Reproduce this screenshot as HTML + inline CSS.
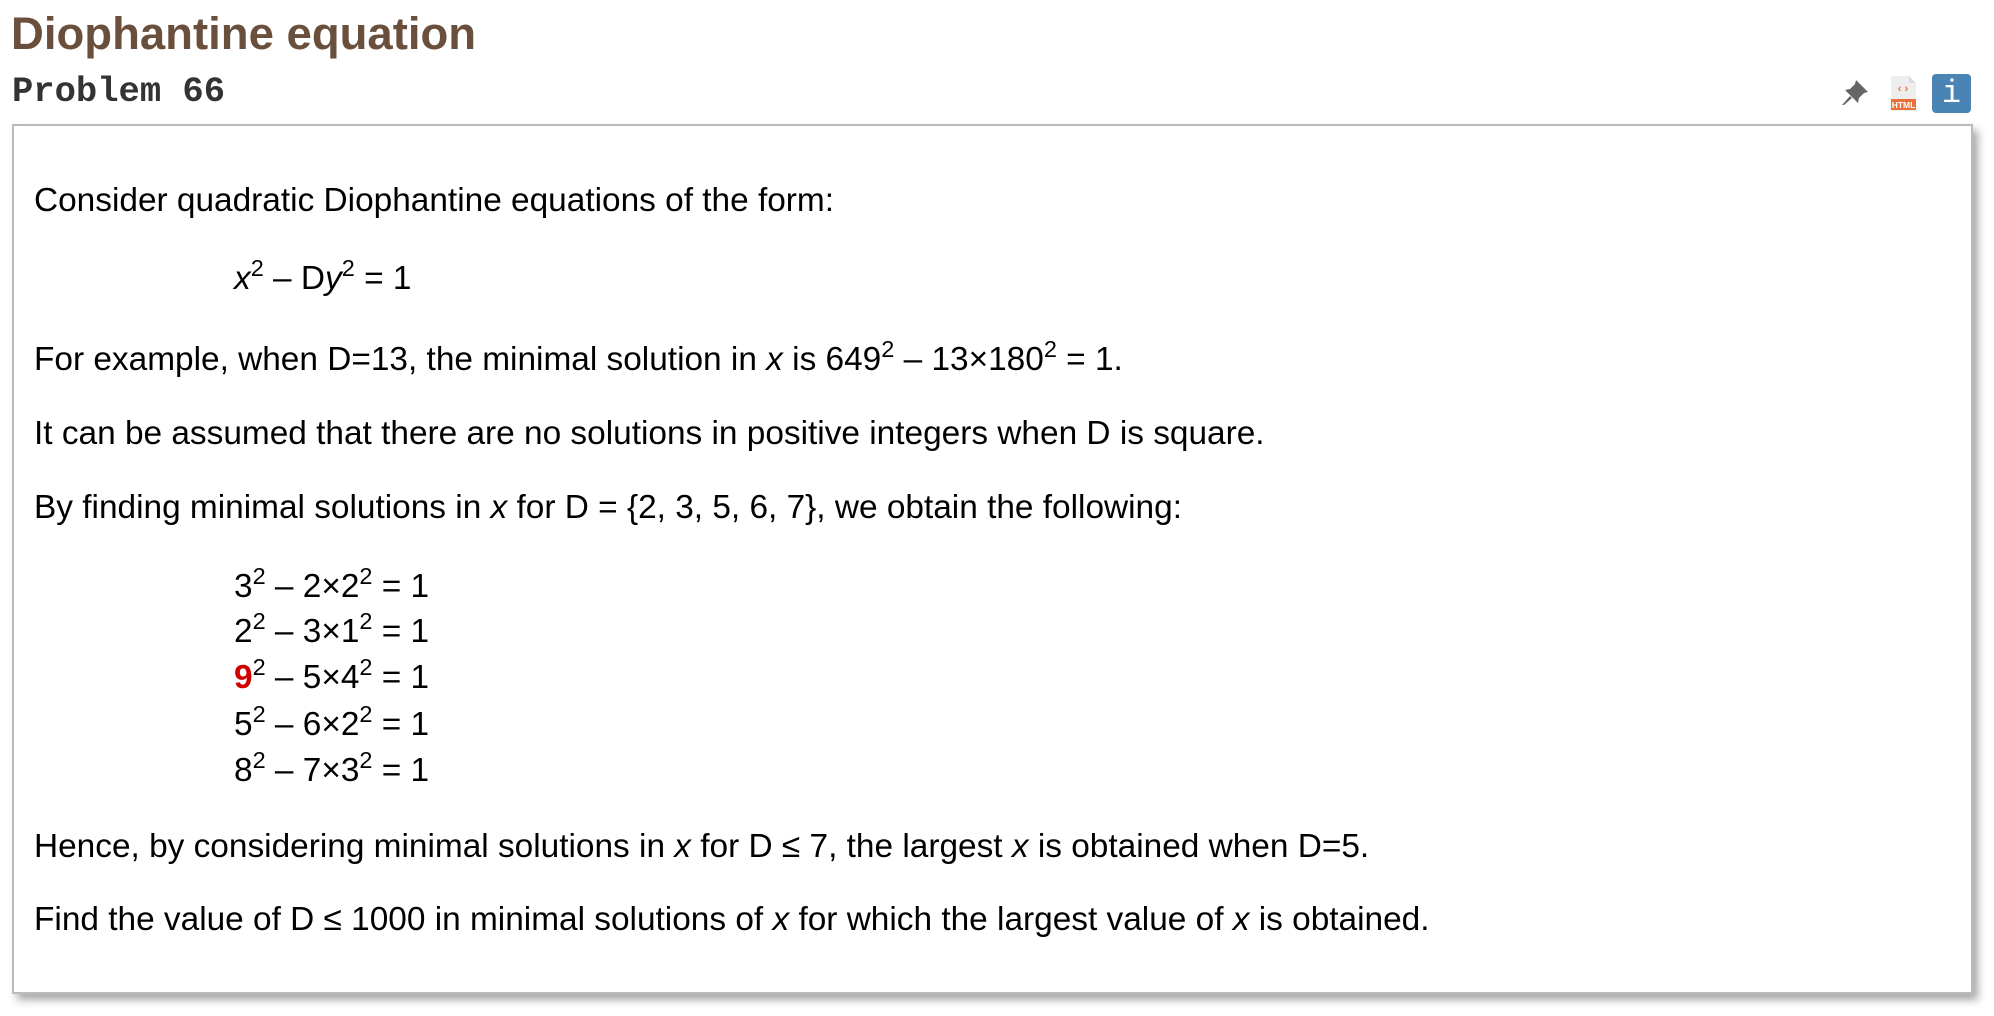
<!DOCTYPE html>
<html><head><meta charset="utf-8"><style>
body{margin:0;background:#fff;width:1994px;height:1016px;position:relative;overflow:hidden;font-family:"Liberation Sans",Arial,sans-serif;color:#000}
.a{position:absolute;white-space:nowrap;line-height:33px;font-size:33.4px}
sup{font-size:23.5px;vertical-align:0;position:relative;top:-13px}
i{font-style:italic}
#box{position:absolute;left:12px;top:124px;width:1957px;height:866px;border:2px solid #bbb;box-shadow:5px 6px 8px #aaa;background:#fff}
</style></head><body>
<div class="a" style="left:11px;top:11px;font-size:45.5px;line-height:45px;font-weight:bold;color:#6b4f3d">Diophantine equation</div>
<div class="a" style="left:12px;top:75px;font-family:'Liberation Mono',monospace;font-weight:bold;font-size:35.5px;line-height:34px;color:#333">Problem 66</div>
<svg style="position:absolute;left:1838px;top:74px" width="36" height="36" viewBox="0 0 36 36"><g fill="#666"><path d="M18 6 L30 18 L26 19 L21 24 L20 29 L7 16 L12 15 L17 10 Z"/><path d="M12 22 L4 31 L6 31 L14 24 Z"/></g></svg>
<svg style="position:absolute;left:1888px;top:74px" width="30" height="40" viewBox="0 0 30 40"><path d="M3 2 H21 L28 9 V37 H3 Z" fill="#eee"/><path d="M21 2 V9 H28" fill="#ddd"/><text x="15" y="18" text-anchor="middle" font-size="11" fill="#e8703a" font-family="Liberation Sans" font-weight="bold">‹ ›</text><rect x="3" y="25" width="25" height="11" fill="#e8703a"/><text x="15.5" y="34" text-anchor="middle" font-size="8.5" fill="#fff" font-family="Liberation Sans" font-weight="bold">HTML</text></svg>
<div style="position:absolute;left:1932px;top:74px;width:39px;height:39px;background:#4a84b5;border-radius:4px;color:#fff;font-family:'Liberation Mono',monospace;font-size:32px;line-height:39px;text-align:center">i</div>
<div id="box"></div>
<div class="a" style="left:34px;top:184px">Consider quadratic Diophantine equations of the form:</div>
<div class="a" style="left:234px;top:262px"><i>x</i><sup>2</sup> – D<i>y</i><sup>2</sup> = 1</div>
<div class="a" style="left:34px;top:343px">For example, when D=13, the minimal solution in <i>x</i> is 649<sup>2</sup> – 13×180<sup>2</sup> = 1.</div>
<div class="a" style="left:34px;top:417px">It can be assumed that there are no solutions in positive integers when D is square.</div>
<div class="a" style="left:34px;top:491px">By finding minimal solutions in <i>x</i> for D = {2, 3, 5, 6, 7}, we obtain the following:</div>
<div class="a" style="left:234px;top:570px">3<sup>2</sup> – 2×2<sup>2</sup> = 1</div>
<div class="a" style="left:234px;top:615px">2<sup>2</sup> – 3×1<sup>2</sup> = 1</div>
<div class="a" style="left:234px;top:661px"><b style="color:#d00000">9</b><sup>2</sup> – 5×4<sup>2</sup> = 1</div>
<div class="a" style="left:234px;top:708px">5<sup>2</sup> – 6×2<sup>2</sup> = 1</div>
<div class="a" style="left:234px;top:754px">8<sup>2</sup> – 7×3<sup>2</sup> = 1</div>
<div class="a" style="left:34px;top:830px">Hence, by considering minimal solutions in <i>x</i> for D ≤ 7, the largest <i>x</i> is obtained when D=5.</div>
<div class="a" style="left:34px;top:903px">Find the value of D ≤ 1000 in minimal solutions of <i>x</i> for which the largest value of <i>x</i> is obtained.</div>
</body></html>
